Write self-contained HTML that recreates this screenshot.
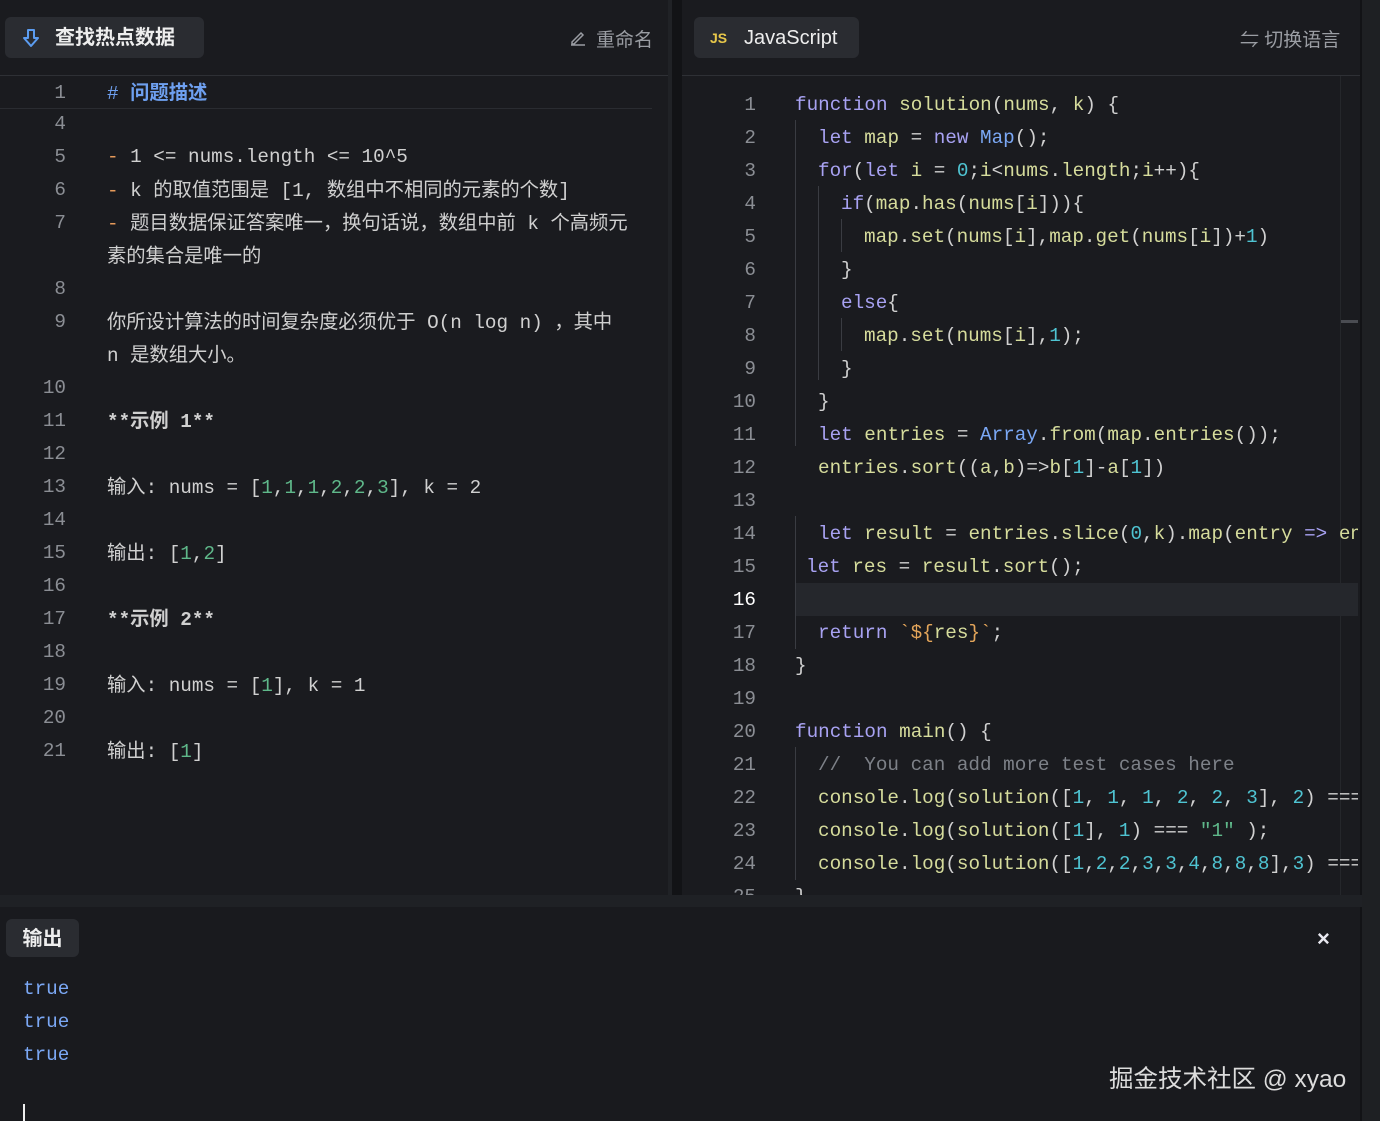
<!DOCTYPE html>
<html><head><meta charset="utf-8"><style>
*{margin:0;padding:0;box-sizing:border-box}
body{width:1380px;height:1121px;background:#121316;position:relative;overflow:hidden;font-family:"Liberation Mono","Noto Sans CJK SC",monospace;font-size:19.3px;color:#d0d0d0}
.pan{position:absolute;background:#1a1b1f}
.l{position:absolute;height:33px;line-height:33px;white-space:pre;margin-top:1px}
.num{position:absolute;height:33px;line-height:33px;text-align:right;color:#8b8e94;width:40px;margin-top:1px}
.cn{font-family:"Liberation Sans","Noto Sans CJK SC",sans-serif}
.k{color:#a8a2f2}.f{color:#d6dc9c}.n{color:#4fc4d2}.t{color:#7ba8f5}.c{color:#7d8188}.s{color:#e3a55a}.g{color:#5fb88a}.o{color:#e69a5a}.h{color:#6ea0f0}
.tab{position:absolute;background:#2a2c31;border-radius:6px;font-family:"Liberation Sans","Noto Sans CJK SC",sans-serif;font-weight:bold;color:#eee}
.guide{position:absolute;width:1px;background:#3a3c42}
</style></head><body>
<!-- left panel -->
<div class="pan" style="left:0;top:0;width:672px;height:895px"></div>
<div style="position:absolute;left:0;top:75px;width:672px;height:1px;background:#2e3035"></div>
<div style="position:absolute;left:0;top:108px;width:652px;height:1px;background:#2a2c31"></div>
<div style="position:absolute;left:668px;top:0;width:4px;height:895px;background:#202226"></div>
<div class="tab" style="left:5px;top:17px;width:199px;height:41px;font-size:20px;line-height:43px;padding-left:50px">查找热点数据</div>
<svg style="position:absolute;left:22px;top:28px" width="18" height="20" viewBox="0 0 18 20"><path d="M6 2h6v8h4l-7 8-7-8h4z" fill="none" stroke="#5b9cf0" stroke-width="2" stroke-linejoin="round"/></svg>
<div class="cn" style="position:absolute;left:596px;top:25px;font-size:19px;color:#9a9da3">重命名</div>
<svg style="position:absolute;left:569px;top:29px" width="18" height="18" viewBox="0 0 18 18"><path d="M3 13l9-9 2 2-9 9H3z M2 16h14" fill="none" stroke="#9a9da3" stroke-width="1.5"/></svg>

<div class="num" style="left:26px;top:75.5px">1</div><div class="l h" style="left:107px;top:75.5px"># <b class="cn">问题描述</b></div>
<div class="num" style="left:26px;top:106.5px">4</div>
<div class="num" style="left:26px;top:139.5px">5</div><div class="l" style="left:107px;top:139.5px"><span class="o">-</span> 1 &lt;= nums.length &lt;= 10^5</div>
<div class="num" style="left:26px;top:172.5px">6</div><div class="l" style="left:107px;top:172.5px"><span class="o">-</span> k <span class="cn">的取值范围是</span> [1, <span class="cn">数组中不相同的元素的个数</span>]</div>
<div class="num" style="left:26px;top:205.5px">7</div><div class="l" style="left:107px;top:205.5px"><span class="o">-</span> <span class="cn">题目数据保证答案唯一，换句话说，数组中前</span> k <span class="cn">个高频元</span></div>
<div class="l cn" style="left:107px;top:238.5px">素的集合是唯一的</div>
<div class="num" style="left:26px;top:271.5px">8</div>
<div class="num" style="left:26px;top:304.5px">9</div><div class="l" style="left:107px;top:304.5px"><span class="cn">你所设计算法的时间复杂度必须优于</span> O(n log n) <span class="cn">，其中</span></div>
<div class="l" style="left:107px;top:337.5px">n <span class="cn">是数组大小。</span></div>
<div class="num" style="left:26px;top:370.5px">10</div>
<div class="num" style="left:26px;top:403.5px">11</div><div class="l" style="left:107px;top:403.5px;font-weight:bold">**<span class="cn">示例</span> 1**</div>
<div class="num" style="left:26px;top:436.5px">12</div>
<div class="num" style="left:26px;top:469.5px">13</div><div class="l" style="left:107px;top:469.5px"><span class="cn">输入</span>: nums = [<span class="g">1</span>,<span class="g">1</span>,<span class="g">1</span>,<span class="g">2</span>,<span class="g">2</span>,<span class="g">3</span>], k = 2</div>
<div class="num" style="left:26px;top:502.5px">14</div>
<div class="num" style="left:26px;top:535.5px">15</div><div class="l" style="left:107px;top:535.5px"><span class="cn">输出</span>: [<span class="g">1</span>,<span class="g">2</span>]</div>
<div class="num" style="left:26px;top:568.5px">16</div>
<div class="num" style="left:26px;top:601.5px">17</div><div class="l" style="left:107px;top:601.5px;font-weight:bold">**<span class="cn">示例</span> 2**</div>
<div class="num" style="left:26px;top:634.5px">18</div>
<div class="num" style="left:26px;top:667.5px">19</div><div class="l" style="left:107px;top:667.5px"><span class="cn">输入</span>: nums = [<span class="g">1</span>], k = 1</div>
<div class="num" style="left:26px;top:700.5px">20</div>
<div class="num" style="left:26px;top:733.5px">21</div><div class="l" style="left:107px;top:733.5px"><span class="cn">输出</span>: [<span class="g">1</span>]</div>

<!-- right panel -->
<div class="pan" style="left:682px;top:0;width:678px;height:895px"></div>
<div style="position:absolute;left:682px;top:75px;width:678px;height:1px;background:#2e3035"></div>
<div style="position:absolute;left:1340px;top:76px;width:1px;height:819px;background:#25272b"></div>
<div style="position:absolute;left:1341px;top:320px;width:17px;height:3px;background:#4a4c52"></div>
<div class="tab" style="left:694px;top:17px;width:165px;height:41px;font-size:20px;line-height:43px;padding-left:50px;font-weight:normal">JavaScript</div>
<div style="position:absolute;left:710px;top:30px;font-family:'Liberation Sans',sans-serif;font-size:14px;font-weight:bold;color:#e8c84a">JS</div>
<div class="cn" style="position:absolute;left:1240px;top:25px;font-size:19px;color:#9a9da3">⇋ 切换语言</div>
<div style="position:absolute;left:795px;top:583px;width:563px;height:33px;background:#25272c"></div>
<div class="guide" style="left:795px;top:120px;height:326px"></div>
<div class="guide" style="left:795px;top:516px;height:133px"></div>
<div class="guide" style="left:818px;top:186px;height:194px"></div>
<div class="guide" style="left:841px;top:219px;height:33px"></div>
<div class="guide" style="left:841px;top:318px;height:33px"></div>
<div class="guide" style="left:795px;top:747px;height:133px"></div>

<div class="num" style="left:716px;top:87.5px">1</div><div class="l" style="left:795px;top:87.5px"><span class="k">function</span> <span class="f">solution</span>(<span class="f">nums</span>, <span class="f">k</span>) {</div>
<div class="num" style="left:716px;top:120.5px">2</div><div class="l" style="left:818px;top:120.5px"><span class="k">let</span> <span class="f">map</span> = <span class="k">new</span> <span class="t">Map</span>();</div>
<div class="num" style="left:716px;top:153.5px">3</div><div class="l" style="left:818px;top:153.5px"><span class="k">for</span>(<span class="k">let</span> <span class="f">i</span> = <span class="n">0</span>;<span class="f">i</span>&lt;<span class="f">nums</span>.<span class="f">length</span>;<span class="f">i</span>++){</div>
<div class="num" style="left:716px;top:186.5px">4</div><div class="l" style="left:841px;top:186.5px"><span class="k">if</span>(<span class="f">map</span>.<span class="f">has</span>(<span class="f">nums</span>[<span class="f">i</span>])){</div>
<div class="num" style="left:716px;top:219.5px">5</div><div class="l" style="left:864px;top:219.5px"><span class="f">map</span>.<span class="f">set</span>(<span class="f">nums</span>[<span class="f">i</span>],<span class="f">map</span>.<span class="f">get</span>(<span class="f">nums</span>[<span class="f">i</span>])+<span class="n">1</span>)</div>
<div class="num" style="left:716px;top:252.5px">6</div><div class="l" style="left:841px;top:252.5px">}</div>
<div class="num" style="left:716px;top:285.5px">7</div><div class="l" style="left:841px;top:285.5px"><span class="k">else</span>{</div>
<div class="num" style="left:716px;top:318.5px">8</div><div class="l" style="left:864px;top:318.5px"><span class="f">map</span>.<span class="f">set</span>(<span class="f">nums</span>[<span class="f">i</span>],<span class="n">1</span>);</div>
<div class="num" style="left:716px;top:351.5px">9</div><div class="l" style="left:841px;top:351.5px">}</div>
<div class="num" style="left:716px;top:384.5px">10</div><div class="l" style="left:818px;top:384.5px">}</div>
<div class="num" style="left:716px;top:417.5px">11</div><div class="l" style="left:818px;top:417.5px"><span class="k">let</span> <span class="f">entries</span> = <span class="t">Array</span>.<span class="f">from</span>(<span class="f">map</span>.<span class="f">entries</span>());</div>
<div class="num" style="left:716px;top:450.5px">12</div><div class="l" style="left:818px;top:450.5px"><span class="f">entries</span>.<span class="f">sort</span>((<span class="f">a</span>,<span class="f">b</span>)=&gt;<span class="f">b</span>[<span class="n">1</span>]-<span class="f">a</span>[<span class="n">1</span>])</div>
<div class="num" style="left:716px;top:483.5px">13</div>
<div class="num" style="left:716px;top:516.5px">14</div><div class="l" style="left:818px;top:516.5px;width:540px;overflow:hidden"><span class="k">let</span> <span class="f">result</span> = <span class="f">entries</span>.<span class="f">slice</span>(<span class="n">0</span>,<span class="f">k</span>).<span class="f">map</span>(<span class="f">entry</span> <span class="k">=&gt;</span> <span class="f">entry</span></div>
<div class="num" style="left:716px;top:549.5px">15</div><div class="l" style="left:806px;top:549.5px"><span class="k">let</span> <span class="f">res</span> = <span class="f">result</span>.<span class="f">sort</span>();</div>
<div class="num" style="left:716px;top:582.5px;color:#fff">16</div>
<div class="num" style="left:716px;top:615.5px">17</div><div class="l" style="left:818px;top:615.5px"><span class="k">return</span> <span class="s">`${</span><span class="f">res</span><span class="s">}`</span>;</div>
<div class="num" style="left:716px;top:648.5px">18</div><div class="l" style="left:795px;top:648.5px">}</div>
<div class="num" style="left:716px;top:681.5px">19</div>
<div class="num" style="left:716px;top:714.5px">20</div><div class="l" style="left:795px;top:714.5px"><span class="k">function</span> <span class="f">main</span>() {</div>
<div class="num" style="left:716px;top:747.5px">21</div><div class="l c" style="left:818px;top:747.5px">//  You can add more test cases here</div>
<div class="num" style="left:716px;top:780.5px">22</div><div class="l" style="left:818px;top:780.5px;width:540px;overflow:hidden"><span class="f">console</span>.<span class="f">log</span>(<span class="f">solution</span>([<span class="n">1</span>, <span class="n">1</span>, <span class="n">1</span>, <span class="n">2</span>, <span class="n">2</span>, <span class="n">3</span>], <span class="n">2</span>) === "1,2"</div>
<div class="num" style="left:716px;top:813.5px">23</div><div class="l" style="left:818px;top:813.5px"><span class="f">console</span>.<span class="f">log</span>(<span class="f">solution</span>([<span class="n">1</span>], <span class="n">1</span>) === <span class="g">"1"</span> );</div>
<div class="num" style="left:716px;top:846.5px">24</div><div class="l" style="left:818px;top:846.5px;width:540px;overflow:hidden"><span class="f">console</span>.<span class="f">log</span>(<span class="f">solution</span>([<span class="n">1</span>,<span class="n">2</span>,<span class="n">2</span>,<span class="n">3</span>,<span class="n">3</span>,<span class="n">4</span>,<span class="n">8</span>,<span class="n">8</span>,<span class="n">8</span>],<span class="n">3</span>) === "8,3"</div>
<div style="position:absolute;left:682px;top:884px;width:678px;height:11px;overflow:hidden"><div class="num" style="left:34px;top:-4px">25</div><div class="l" style="left:113px;top:-4px">}</div></div>

<!-- bottom panel -->
<div style="position:absolute;left:0;top:895px;width:1362px;height:12px;background:#1f2125"></div>
<div class="pan" style="left:0;top:907px;width:1360px;height:214px;background:#191a1e"></div>
<div style="position:absolute;left:1362px;top:0;width:18px;height:1121px;background:#1e2023"></div>
<div class="tab" style="left:6px;top:919px;width:73px;height:38px;font-size:20px;line-height:40px;text-align:center">输出</div>
<div style="position:absolute;left:1317px;top:926px;font-family:'Liberation Sans',sans-serif;font-size:22px;font-weight:bold;color:#e8e8f0">×</div>
<div class="l t" style="left:23px;top:972px">true</div>
<div class="l t" style="left:23px;top:1005px">true</div>
<div class="l t" style="left:23px;top:1038px">true</div>
<div style="position:absolute;left:23px;top:1104px;width:2px;height:17px;background:#eee"></div>
<div class="cn" style="position:absolute;left:1109px;top:1060px;font-size:24.5px;color:#dcdcdc">掘金技术社区 @ xyao</div>
</body></html>
